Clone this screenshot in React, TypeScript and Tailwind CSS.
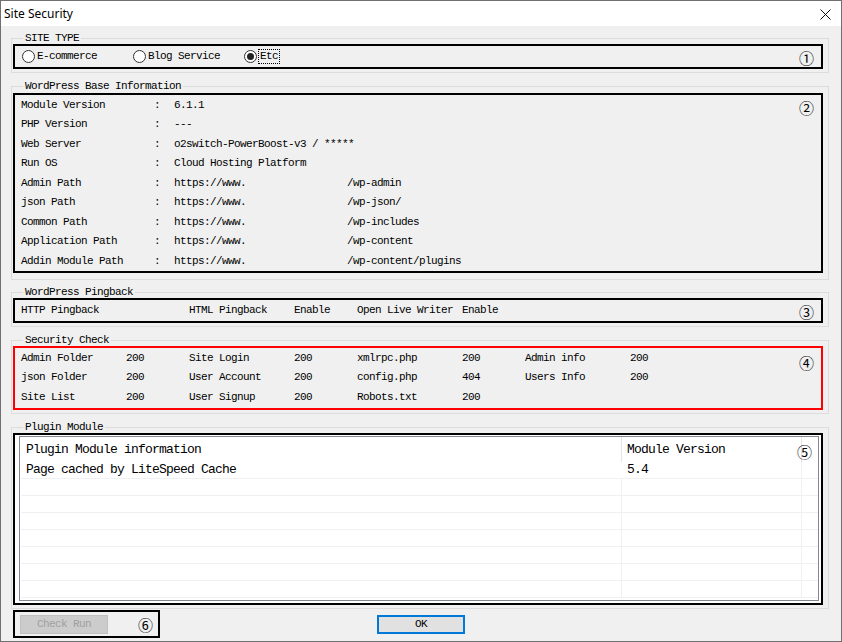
import type { ReactNode } from 'react';

const mono = "font-['Liberation_Mono','Noto_Sans_CJK_JP',monospace] text-[11px] tracking-[-0.6px] text-black";
const badge = "absolute font-['Noto_Sans_CJK_JP',sans-serif] text-[15px] leading-none tracking-normal text-black";

const baseInfo: [string, string, string][] = [
  ['Module Version', '6.1.1', ''],
  ['PHP Version', '---', ''],
  ['Web Server', 'o2switch-PowerBoost-v3 / *****', ''],
  ['Run OS', 'Cloud Hosting Platform', ''],
  ['Admin Path', 'https://www.', '/wp-admin'],
  ['json Path', 'https://www.', '/wp-json/'],
  ['Common Path', 'https://www.', '/wp-includes'],
  ['Application Path', 'https://www.', '/wp-content'],
  ['Addin Module Path', 'https://www.', '/wp-content/plugins'],
];

const checks: string[][] = [
  ['Admin Folder', '200', 'Site Login', '200', 'xmlrpc.php', '200', 'Admin info', '200'],
  ['json Folder', '200', 'User Account', '200', 'config.php', '404', 'Users Info', '200'],
  ['Site List', '200', 'User Signup', '200', 'Robots.txt', '200', '', ''],
];

function Group({ label, className, children }: { label: string; className: string; children: ReactNode }) {
  return (
    <div className={`relative border border-[#dcdcdc] pl-px pr-[5px] ${className}`}>
      <span className="absolute -top-[8px] left-[11px] bg-[#f0f0f0] px-[2px] leading-[14px]">{label}</span>
      {children}
    </div>
  );
}

function Radio({ label, checked }: { label: string; checked?: boolean }) {
  return (
    <div className="flex w-[111px] items-center">
      <span className="flex h-[13px] w-[13px] items-center justify-center rounded-full border border-[#333] bg-white">
        {checked && <span className="h-[7px] w-[7px] rounded-full bg-[#222]" />}
      </span>
      {checked ? (
        <span className="ml-[1px] border border-dotted border-black px-[1px] leading-[13px]">{label}</span>
      ) : (
        <span className="ml-[2px]">{label}</span>
      )}
    </div>
  );
}

export default function App() {
  return (
    <div className={`h-[642px] w-[842px] overflow-hidden border border-[#707070] bg-[#f0f0f0] ${mono}`}>
      <div className="relative flex h-[25px] items-center bg-white pl-[3px]">
        <span className="font-['Noto_Sans',sans-serif] text-[12px] tracking-normal">Site Security</span>
        <svg className="absolute right-[10px] top-[8px]" width="11" height="11" viewBox="0 0 11 11">
          <path d="M0.5 0.5 L10.5 10.5 M10.5 0.5 L0.5 10.5" stroke="#111" strokeWidth="1" />
        </svg>
      </div>

      <div className="pl-[10px] pr-[12px]">
        <Group label="SITE TYPE" className="mt-[12px] h-[35px] pt-[5px]">
          <div className="relative flex h-[25px] items-center border-2 border-black pl-[7px]">
            <Radio label="E-commerce" />
            <Radio label="Blog Service" />
            <Radio label="Etc" checked />
            <span className={`${badge} right-[7px] top-[4px]`}>①</span>
          </div>
        </Group>

        <Group label="WordPress Base Information" className="mt-[13px] h-[194px] pt-[6px]">
          <div className="relative h-[180px] border-2 border-black pl-[6px]">
            {baseInfo.map(([k, v, p]) => (
              <div key={k} className="flex h-[19.5px] items-center whitespace-pre">
                <span className="w-[133px]">{k}</span>
                <span className="w-[20px]">:</span>
                <span className="w-[173px]">{v}</span>
                <span>{p}</span>
              </div>
            ))}
            <span className={`${badge} right-[7px] top-[5px]`}>②</span>
          </div>
        </Group>

        <Group label="WordPress Pingback" className="mt-[12px] h-[35px] pt-[5px]">
          <div className="relative flex h-[25px] items-center border-2 border-black pl-[6px]">
            <span className="w-[168px]">HTTP Pingback</span>
            <span className="w-[105px]">HTML Pingback</span>
            <span className="w-[63px]">Enable</span>
            <span className="w-[105px]">Open Live Writer</span>
            <span>Enable</span>
            <span className={`${badge} right-[7px] top-[4px]`}>③</span>
          </div>
        </Group>

        <Group label="Security Check" className="mt-[13px] h-[74px] pt-[5px]">
          <div className="relative h-[64px] border-2 border-[#ff0000] pl-[6px]">
            {checks.map((row, i) => (
              <div key={i} className="flex h-[19.5px] items-center">
                {row.map((cell, j) => (
                  <span key={j} className={j % 2 === 0 ? 'w-[105px]' : 'w-[63px]'}>
                    {cell}
                  </span>
                ))}
              </div>
            ))}
            <span className={`${badge} right-[7px] top-[7px]`}>④</span>
          </div>
        </Group>

        <Group label="Plugin Module" className="mt-[13px] h-[182px] pt-[5px]">
          <div className="relative h-[172px] border-2 border-black bg-white pb-[2px] pl-[4px] pr-[2px] pt-px">
            <div className="h-full border border-[#828790] bg-white font-['Liberation_Mono',monospace] text-[13px] tracking-[-0.8px]">
              <div className="flex h-[25px] items-center">
                <div className="flex h-full w-[602px] items-center border-r border-[#e5e5e5] pl-[6px]">Plugin Module information</div>
                <div className="flex h-full w-[180px] items-center border-r border-[#e5e5e5] pl-[5px]">Module Version</div>
                <div className="flex-1" />
              </div>
              <div className="ml-px flex h-[17px] items-center border-b border-[#f0f0f0]">
                <div className="w-[601px] pl-[5px]">Page cached by LiteSpeed Cache</div>
                <div className="h-full w-[180px] border-r border-[#f0f0f0] pl-[5px] leading-[16px]">5.4</div>
              </div>
              {Array.from({ length: 7 }).map((_, i) => (
                <div key={i} className="ml-px flex h-[17px] border-b border-[#f0f0f0]">
                  <div className="w-[601px] border-r border-[#f0f0f0]" />
                  <div className="w-[180px] border-r border-[#f0f0f0]" />
                </div>
              ))}
            </div>
            <span className={`${badge} right-[9px] top-[9px]`}>⑤</span>
          </div>
        </Group>

        <div className="mt-px flex items-start">
          <div className="relative ml-[2px] h-[28px] w-[147px] border-2 border-black pl-[5px] pt-[3px]">
            <div className="flex h-[19px] w-[88px] items-center justify-center border border-[#bfbfbf] bg-[#cccccc] text-[#a0a0a0]">
              Check Run
            </div>
            <span className={`${badge} right-[5px] top-[5px]`}>⑥</span>
          </div>
          <div className="ml-[217px] mt-[5px] flex h-[19px] w-[88px] items-center justify-center border-2 border-[#0078d7] bg-[#e1e1e1]">
            OK
          </div>
        </div>
      </div>
    </div>
  );
}
